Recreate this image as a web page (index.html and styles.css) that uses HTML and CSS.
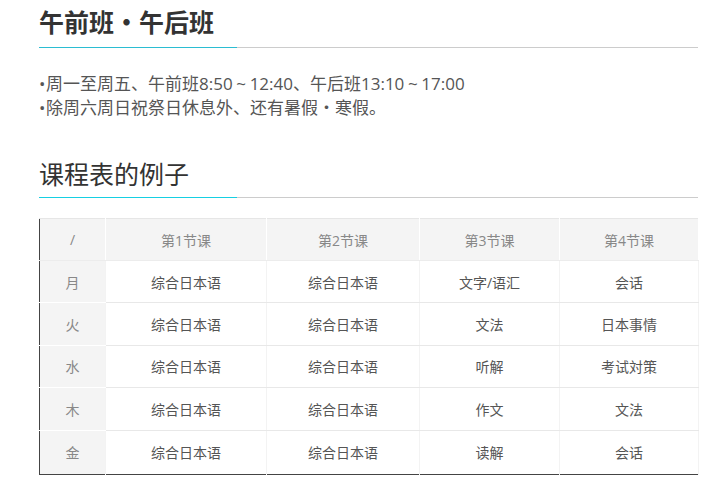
FILE: index.html
```html
<!DOCTYPE html>
<html lang="zh">
<head>
<meta charset="utf-8">
<link rel="stylesheet" href="styles.css">
</head>
<body>
<div class="page">
  <h1 class="title">午前班・午后班</h1>
  <ul class="notes">
    <li><span class="dot">•</span>周一至周五、午前班8:50<span class="tilde">~</span>12:40、午后班13:10<span class="tilde">~</span>17:00</li>
    <li><span class="dot">•</span>除周六周日祝祭日休息外、还有暑假・寒假。</li>
  </ul>
  <h2 class="subtitle">课程表的例子</h2>
  <table class="schedule">
    <colgroup>
      <col class="c0"><col class="c1"><col class="c2"><col class="c3"><col class="c4">
    </colgroup>
    <thead>
      <tr><th>/</th><th>第1节课</th><th>第2节课</th><th>第3节课</th><th>第4节课</th></tr>
    </thead>
    <tbody>
      <tr><th>月</th><td>综合日本语</td><td>综合日本语</td><td>文字/语汇</td><td>会话</td></tr>
      <tr><th>火</th><td>综合日本语</td><td>综合日本语</td><td>文法</td><td>日本事情</td></tr>
      <tr><th>水</th><td>综合日本语</td><td>综合日本语</td><td>听解</td><td>考试対策</td></tr>
      <tr><th>木</th><td>综合日本语</td><td>综合日本语</td><td>作文</td><td>文法</td></tr>
      <tr><th>金</th><td>综合日本语</td><td>综合日本语</td><td>读解</td><td>会话</td></tr>
    </tbody>
  </table>
</div>
</body>
</html>
```
FILE: styles.css
```css
html, body {
  margin: 0;
  padding: 0;
  background: #fff;
}
body {
  font-family: "Open Sans", "Noto Sans CJK SC", sans-serif;
  color: #555;
}
.page {
  width: 659px;
  padding-left: 39px;
}
.title {
  position: relative;
  margin: 6px 0 0;
  padding-bottom: 9px;
  font-size: 25px;
  line-height: 32px;
  font-weight: bold;
  color: #333;
  border-bottom: 1px solid #cccccc;
}
.subtitle {
  position: relative;
  margin: 38px 0 0;
  padding-bottom: 7px;
  font-size: 25px;
  line-height: 32px;
  font-weight: normal;
  color: #333;
  border-bottom: 1px solid #cccccc;
}
.title::after,
.subtitle::after {
  content: "";
  position: absolute;
  left: 0;
  bottom: -1px;
  width: 198px;
  height: 1px;
  background: #2bbdd2;
}
.subtitle::after {
  background: #16cfe2;
}
.notes {
  list-style: none;
  margin: 24px 0 0;
  padding: 0;
  font-size: 17px;
  line-height: 24px;
  color: #555;
}
.dot {
  display: inline-block;
  width: 7px;
}
.tilde {
  display: inline-block;
  width: 17px;
  text-align: center;
}
.schedule {
  margin-top: 20px;
  width: 659px;
  border-collapse: collapse;
  border-top: 1px solid #e6e6e6;
  border-left: 1px solid #444;
  border-right: 1px solid #444;
  border-bottom: 1px solid #444;
  font-size: 14px;
  table-layout: fixed;
}
.c0 { width: 66px; }
.c1 { width: 161px; }
.c2 { width: 153px; }
.c3 { width: 140px; }
.c4 { width: 139px; }
.schedule th,
.schedule td {
  height: 41px;
  padding: 0;
  text-align: center;
  font-weight: normal;
  border-bottom: 1px solid #e8e8e8;
  border-right: 1px solid #f3f3f3;
}
.schedule tbody th,
.schedule tbody td {
  height: 41.4px;
}
.schedule thead th {
  background: #f4f4f4;
  color: #888;
  border-right: 1px solid #fff;
  border-bottom: 1px solid #ececec;
}
.schedule tbody th {
  background: #f4f4f4;
  color: #888;
  border-bottom: 1px solid #fff;
}
.schedule td {
  color: #555;
}
.schedule tbody tr:last-child td,
.schedule tbody tr:last-child th {
  border-bottom: none;
  height: 43px;
}
```
